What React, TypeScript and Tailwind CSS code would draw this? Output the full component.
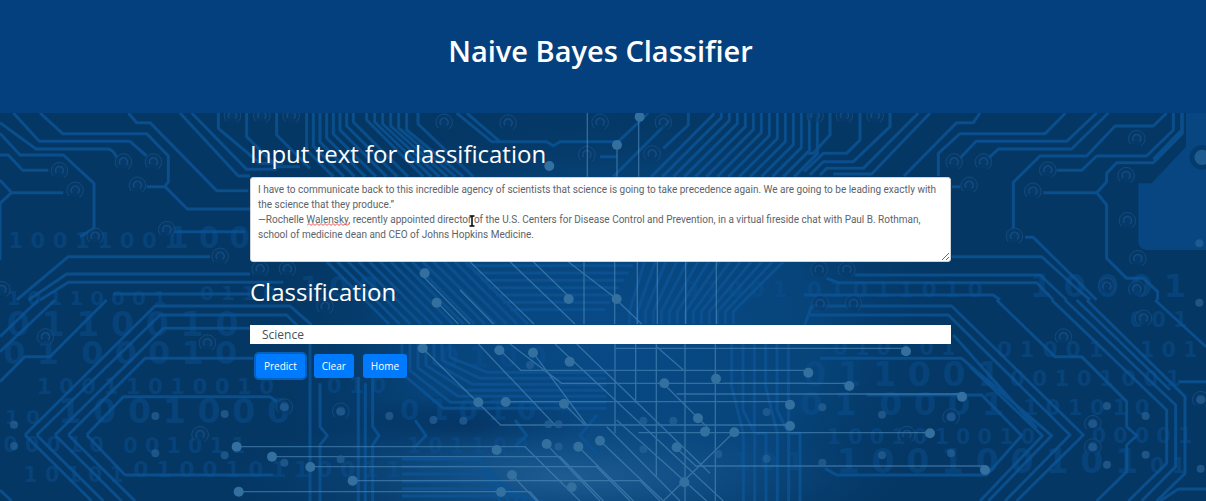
import { useState } from "react";

const SAMPLE =
  "I have to communicate back to this incredible agency of scientists that science is going to take precedence again. We are going to be leading exactly with the science that they produce.”\n—Rochelle Walensky, recently appointed director of the U.S. Centers for Disease Control and Prevention, in a virtual fireside chat with Paul B. Rothman, school of medicine dean and CEO of Johns Hopkins Medicine.";

const range = (n: number) => Array.from({ length: n }, (_, i) => i);

// Broad copper traces of the board.
const TRACES = [
  // upper left
  "M120 39L188 101H440L505 168V245L495 260L562 327H750M440 260H495",
  "M40 39L118 124H390L440 168",
  "M0 68L108 147H325Q340 150 350 172",
  "M0 100L60 165H190L282 250V385L240 410",
  "M0 165H25L68 211H145",
  "M0 240L35 278H190M35 278L0 310V480",
  "M385 39L410 68H450L650 272H745",
  "M540 39L715 228H750M575 39L740 208H830",
  "M655 39V85L780 190H850M740 39V110L830 200H900M830 39V105L930 205",
  "M520 395H735",
  "M50 600L205 470H630",
  "M85 600L200 522H750",
  "M120 600L205 547H850",
  "M340 582H750",
  // lower left
  "M0 710L115 600M0 755L165 600M0 845L75 770H150L320 600",
  "M75 1005L465 618H870L935 675M75 1005L275 1203",
  "M110 1005L480 645H860L905 690M110 1005L310 1203",
  "M165 1005L490 685H750M165 1005L365 1203",
  "M205 1005L435 775H760M205 1005L405 1203",
  "M260 1005L370 890H810L830 905M260 1005L375 1125H820",
  "M0 1170L35 1203",
  "M930 730V1203M960 850V980L982 1007L960 1035V1203M1075 830V1203M1096 850V1203M1118 830V980L1137 1007L1118 1035V1203",
  // top centre
  "M1254 39V72L1420 230M1370 39L1475 125H1640L1660 137L1680 125H1855L1945 39M1400 39L1500 125",
  "M2065 39V75L1990 145M1800 170H1850M1840 230L2010 60",
  // upper right
  "M2490 39V105L2440 160H2415M2580 39V120L2540 160H2470L2412 215",
  "M2670 39V80L2560 185H2470L2430 225",
  "M2755 39L2590 205H2480L2460 225M2790 39L2615 222H2500",
  "M2940 39L2920 68H2870L2712 228",
  "M2815 228V160L2880 101H3135L3197 39M2855 260H2880",
  "M2880 175L2928 124H3200L3290 39M2965 175L2995 147H3215L3325 39",
  "M3040 385V247L3120 168H3260L3345 78H3460L3500 39",
  "M3170 211H3245L3290 168H3440L3520 90V39",
  "M3130 278H3290L3320 245V220L3350 188H3460L3547 100V39M3545 39V90L3460 178",
  "M3290 278L3320 315V475L3380 535H3430L3473 575V600",
  "M3075 412H3100L3290 600M2855 470H3125L3235 570L3270 600",
  "M2565 525H3120L3200 600M2480 535L2515 548H3110L3160 600M2412 585H2980L3000 600",
  // lower right
  "M2412 680L2435 618H2855L3250 1005L3050 1203M2430 645H2845L3210 1005L3015 1203",
  "M2460 775H2885L3155 1007L2965 1203M2860 705L3110 985",
  "M2600 885H2945L3065 1007L2960 1125H2510L2475 1105M2910 800L3127 1007L2940 1203",
  "M2990 600L3165 770H3245L3380 905V980L3410 1007L3380 1035V1115L3290 1203",
  "M3155 600L3500 930V1090L3385 1203M3195 600L3527 915V1100L3425 1203",
  "M3260 600L3555 890V1120L3470 1203M3230 600L3510 870",
  "M3465 600L3618 740M3535 845H3618M3480 1203L3535 1167H3618",
];

// Thin bright connections in the foreground.
const WIRES = [
  "M1762 39V230M1851 150V230M1916 50V230",
  "M1752 485V672M1844 485V672M1912 485V672M1972 485V672M2057 485V672M2149 485V672",
  "M1845 732V1000M1907 732V910M1969 732V1128M2055 732V1203M2146 732V1203",
  "M1410 485L1602 672M1530 485L1725 672M1600 485L1712 595M1705 485L1850 597M1260 520L1410 672",
  "M1310 605L1375 672M1380 570L1480 672M1850 600L1925 672",
  "M1268 745L1502 975H2370",
  "M1435 732L1665 975M1500 750L1562 811H2412",
  "M1530 732L1685 850H2412M1599 758L1760 975M1665 732L2170 1203M1730 732L2130 1120",
  "M1845 745H2718M1517 905H2365M1690 910L1755 975",
  "M2170 850H2548M2030 882H2886M1915 998H2790",
  "M2090 1098H2955M1970 740L2050 810M2000 860L2130 990",
  "M710 1040H1575L1740 1203M815 1070H1680L1810 1203M930 1100H1790L1890 1203",
  "M1058 1142H1920L1980 1203M715 1175H1590L1615 1203",
  "M1536 1125L1610 1203M1640 1033L1800 1203M1735 1040L1900 1203M1800 1022L1990 1203",
  "M1990 1203L2200 998M1820 980L2040 1203M1850 960L2120 1203M2025 1040L2090 1100",
];

const NODES = [
  [1919, 50], [1851, 135], [1648, 198], [1274, 520], [1706, 597], [1850, 597], [1310, 608],
  [1268, 745], [1498, 751], [1599, 758], [1709, 785], [1435, 907], [1517, 906], [1692, 911],
  [2148, 836], [1993, 850], [2370, 914], [2370, 978], [2094, 955], [2203, 997], [2030, 1042],
  [1640, 1032], [1735, 1040], [1800, 1022], [1490, 1050], [1536, 1125], [1503, 1176],
  [1715, 1162], [2053, 1147], [710, 1040], [816, 1070], [931, 1101], [1058, 1142], [716, 1175],
  [2718, 754], [2548, 858], [2886, 890], [2790, 1000], [2955, 1110], [2425, 818], [2115, 995],
];

const FAINT_NODES = [
  [466, 948], [674, 942], [853, 922], [1022, 935], [1168, 948], [42, 974], [42, 1038],
  [466, 1060], [674, 1066], [853, 1088], [1022, 1078], [1300, 960], [1390, 962], [1645, 973],
  [1676, 973], [1676, 1040], [1930, 962], [1930, 1048], [2020, 962], [2300, 936], [2300, 1076],
  [2155, 1062], [1590, 795], [2467, 922], [2646, 944], [2853, 952], [2646, 1066],
  [2853, 1060], [2467, 1088], [3278, 972], [3278, 1042], [3321, 918], [3437, 948], [3437, 1064],
  [3321, 1094], [3602, 900], [3602, 1106], [3598, 608], [3598, 430],
];

const PADS = [
  [178, 213], [225, 272], [370, 187], [460, 187], [412, 257], [500, 390], [660, 470],
  [285, 410], [780, 508], [862, 508], [697, 48], [785, 48], [873, 48], [5, 570],
  [1332, 68], [1524, 70], [1800, 68], [1990, 68], [1760, 165], [1956, 163],
  [2445, 48], [2533, 48], [2625, 48], [2862, 187], [2950, 187], [2907, 257],
  [3143, 211], [3098, 275], [3043, 410], [3410, 117], [3378, 228], [3382, 363],
  [3413, 477], [3320, 560], [3410, 568], [2457, 510], [2540, 510],
  [136, 712], [622, 730], [600, 1005], [975, 620], [3190, 712], [3430, 656],
  [2720, 1005], [3278, 972], [3278, 1042], [2460, 612], [2560, 612],
  [853, 922], [1022, 935], [2853, 952], [3602, 900],
];

const DIGITS: [number, number, number, string][] = [
  [25, 445, 64, "1 0 0 1 1 0 0 1"],
  [505, 445, 88, "1 0 0"],
  [20, 615, 60, "1 0 1 1 0 0 0 1"],
  [600, 600, 60, "0 1 1 0"],
  [900, 590, 84, "1 0 0"],
  [20, 708, 100, "0 1 1 0 0 1 0"],
  [10, 792, 96, "0 1  0 0 0 1 0"],
  [110, 882, 64, "1 0 0 1 1 0 1 0 0 1 0"],
  [15, 972, 60, "1 0"],
  [175, 970, 100, "1 0 0 1 0 0 0"],
  [10, 1055, 62, "0 0 0 1 0"],
  [370, 1058, 62, "0 0 1 0 1 1"],
  [70, 1145, 62, "1 0 1 0 1"],
  [400, 1130, 66, "0 1 0 0 1 0 1 1 0 0 1 1"],
  [980, 880, 64, "0 1 0"],
  [1200, 960, 84, "0 1 0 1 0"],
  [1220, 1060, 62, "1 0 1 1 0 0"],
  [1320, 800, 84, "0 1 0 0"],
  [2050, 590, 64, "0 1 0 0 1"],
  [2420, 592, 66, "0 1 0 1 1 0 1 0"],
  [3090, 592, 96, "1 0 0 0 1"],
  [3390, 680, 62, "0 0 1"],
  [2500, 765, 62, "0 1 0 1 0 1"],
  [2990, 770, 66, "0 1 0 0 1"],
  [3420, 770, 62, "1 0 1"],
  [2410, 858, 100, "0 1 1 0 0 1"],
  [3030, 857, 64, "0 0 1 0 1 0 0 1"],
  [2400, 945, 98, "0 1  0 0 0 1"],
  [3070, 945, 64, "1 0 1 0 1 0"],
  [2480, 1032, 62, "1 0 0 1 0 1 0 0 1 0"],
  [3275, 1030, 62, "0 0 0 0 1"],
  [2510, 1118, 100, "1 0 0 1 0 0 1 0 1"],
  [3450, 1118, 62, "0 1"],
  [2200, 1110, 76, "1 0 1"],
];

function CircuitBoard() {
  return (
    <svg
      aria-hidden="true"
      className="absolute inset-0 h-full w-full"
      viewBox="0 39 3618 1164"
      preserveAspectRatio="xMidYMid slice"
      fill="none"
    >
      <defs>
        <radialGradient id="core">
          <stop offset="0" stopColor="#0a4f90" stopOpacity="0.8" />
          <stop offset="0.55" stopColor="#084c88" stopOpacity="0.6" />
          <stop offset="1" stopColor="#04345f" stopOpacity="0" />
        </radialGradient>
        <radialGradient id="haze">
          <stop offset="0" stopColor="#246298" stopOpacity="0.8" />
          <stop offset="1" stopColor="#0b4b85" stopOpacity="0" />
        </radialGradient>
        <radialGradient id="shade">
          <stop offset="0" stopColor="#022c57" stopOpacity="0.8" />
          <stop offset="1" stopColor="#022c57" stopOpacity="0" />
        </radialGradient>
      </defs>
      <rect y="39" width="3618" height="1164" fill="#043764" />
      <ellipse cx="1850" cy="720" rx="1120" ry="800" fill="url(#core)" />
      <ellipse cx="1400" cy="980" rx="380" ry="100" fill="url(#shade)" />
      <ellipse cx="1700" cy="1130" rx="1000" ry="210" fill="url(#haze)" />
      <path d="M3558 39H3618V450H3440Q3415 445 3415 425V250H3455L3558 140Z" fill="#084681" />

      <g fill="#0b5192" opacity="0.45" fontFamily="'DejaVu Sans', sans-serif" fontWeight="700">
        {DIGITS.map(([x, y, size, text], i) => (
          <text key={i} x={x} y={y} fontSize={size} xmlSpace="preserve">
            {text}
          </text>
        ))}
      </g>

      <g stroke="#0c5496" strokeWidth="9" strokeLinejoin="round" opacity="0.8">
        {TRACES.map((d) => (
          <path key={d} d={d} />
        ))}
        {range(8).map((i) => (
          <path key={`fl${i}`} d={`M${920 + i * 20} 39V${150 - i * 12}L${1000 + i * 32} 230`} />
        ))}
        {range(6).map((i) => (
          <path key={`tl${i}`} d={`M${1100 + i * 24} 39V${60 + i * 6}L${1270 + i * 24} 230`} />
        ))}
        {range(14).map((i) => (
          <path key={`tr${i}`} d={`M${2140 + i * 24} 39V${44 + i * 9}L${1954 + i * 33} 230`} />
        ))}
        {range(14).map((i) => (
          <path key={`ml${i}`} d={`M${980 + i * 32} 485L${1167 + i * 32} 672`} />
        ))}
        {range(14).map((i) => (
          <path key={`mr${i}`} d={`M${2350 - i * 32} 485L${2200 - i * 24} 635V672`} />
        ))}
        {range(7).map((i) => (
          <path key={`mh${i}`} d={`M${1400 + i * 22} ${497 + i * 22}H${1900 - i * 14}`} />
        ))}
        {range(7).map((i) => (
          <path key={`ll${i}`} d={`M${1206 + i * 24} 732V${820 - i * 8}L${1330 + i * 22} ${925 - i * 18}H${1820}`} />
        ))}
        {range(6).map((i) => (
          <path key={`rv${i}`} d={`M${2195 + i * 34} 732V${860 + (i % 3) * 70}L${2230 + i * 34} 1000V1203`} />
        ))}
        {range(6).map((i) => (
          <path key={`bl${i}`} d={`M1206 ${1078 + i * 22}H${1440 + i * 20}L${1500 + i * 26} 1203`} />
        ))}
        <path d="M1245 960L1278 1007L1245 1040M1545 960L1580 1007L1545 1040M1790 945L1740 1007L1800 1070" />
      </g>

      <g stroke="#1a5083" strokeWidth="3" fill="#063c6e" opacity="0.8">
        {PADS.map(([x, y], i) => (
          <g key={i}>
            <path d={`M${x - 18} ${y + 16}A25 25 0 1 1 ${x + 14} ${y + 20}`} fillOpacity="0.6" />
            <path d={`M${x - 9} ${y + 6}A12 12 0 1 1 ${x + 8} ${y + 8}`} strokeWidth="5" />
          </g>
        ))}
      </g>
      <circle cx="3606" cy="172" r="30" stroke="#053a6c" strokeWidth="14" fill="#1d5b91" />

      <g stroke="#4d8ab8" strokeWidth="4" opacity="0.62">
        {WIRES.map((d) => (
          <path key={d} d={d} />
        ))}
      </g>
      <g fill="#286297" opacity="0.7">
        {FAINT_NODES.map(([x, y], i) => (
          <circle key={i} cx={x} cy={y} r="12" />
        ))}
      </g>
      <g fill="#34709f">
        {NODES.map(([x, y], i) => (
          <circle key={i} cx={x} cy={y} r="15" />
        ))}
      </g>
    </svg>
  );
}

const BUTTON =
  "h-6 cursor-pointer rounded-[3px] bg-[#007bff] px-2 text-[10px] leading-4 text-white hover:bg-[#0069d9] focus:outline-none";

export default function App() {
  const [text, setText] = useState(SAMPLE);
  const [result, setResult] = useState("Science");

  const clear = () => {
    setText("");
    setResult("");
  };

  return (
    <div className="flex min-h-screen flex-col bg-[#043764] font-['Open_Sans','Noto_Sans',sans-serif] text-white">
      <header className="bg-[#04407e] px-4 pt-7 pb-10">
        <h1 className="pr-[5px] text-center text-[29px] leading-[45px] font-semibold">Naive Bayes Classifier</h1>
      </header>

      <main className="relative flex-1 overflow-hidden px-4 pt-[23px] pb-10">
        <CircuitBoard />
        <div className="relative pr-[5px]">
          <form className="mx-auto max-w-[701px]" onSubmit={(e) => e.preventDefault()}>
            <label htmlFor="source" className="block pb-[5px] text-[24px] leading-9">
              Input text for classification
            </label>
            <div className="relative">
              <textarea
                id="source"
                spellCheck={false}
                value={text}
                onChange={(e) => setText(e.target.value)}
                className="block h-[85px] w-full resize-y rounded-[3px] border border-[#ced4da] bg-white px-[7px] py-1 font-[Roboto,sans-serif] text-[10px] leading-[15px] text-[#5c636a] focus:outline-none"
              />
              {text === SAMPLE && (
                <svg aria-hidden="true" className="absolute top-[46px] left-[57px] h-[3px] w-[43px]" viewBox="0 0 43 3" fill="none">
                  <path
                    d="M0 2.5L2 .5L4 2.5L6 .5L8 2.5L10 .5L12 2.5L14 .5L16 2.5L18 .5L20 2.5L22 .5L24 2.5L26 .5L28 2.5L30 .5L32 2.5L34 .5L36 2.5L38 .5L40 2.5L42 .5"
                    stroke="#f0464b"
                  />
                </svg>
              )}
              <svg aria-hidden="true" className="absolute top-[38px] left-[219px] h-3 w-[6px]" viewBox="0 0 6 12" fill="none">
                <path d="M.5 1H2.5L3 1.5L3.500 1H5.500M3 1V11M.5 11H2.500L3 10.500L3.500 11H5.500" stroke="#000" strokeWidth="1.500" />
              </svg>
            </div>

            <label htmlFor="result" className="block pt-3 pb-[15px] text-[24px] leading-9">
              Classification
            </label>
            <input
              id="result"
              readOnly
              value={result}
              className="block h-[19px] w-full bg-white px-3 text-[12px] leading-[19px] text-[#495057] focus:outline-none"
            />
            <div className="flex gap-[9px] px-[6px] pt-[10px]">
              <button type="submit" className={`${BUTTON} ring-2 ring-[#0561bd]`} onClick={() => setResult("Science")}>
                Predict
              </button>
              <button type="button" className={BUTTON} onClick={clear}>
                Clear
              </button>
              <button type="button" className={BUTTON}>
                Home
              </button>
            </div>
          </form>
        </div>
      </main>
    </div>
  );
}
